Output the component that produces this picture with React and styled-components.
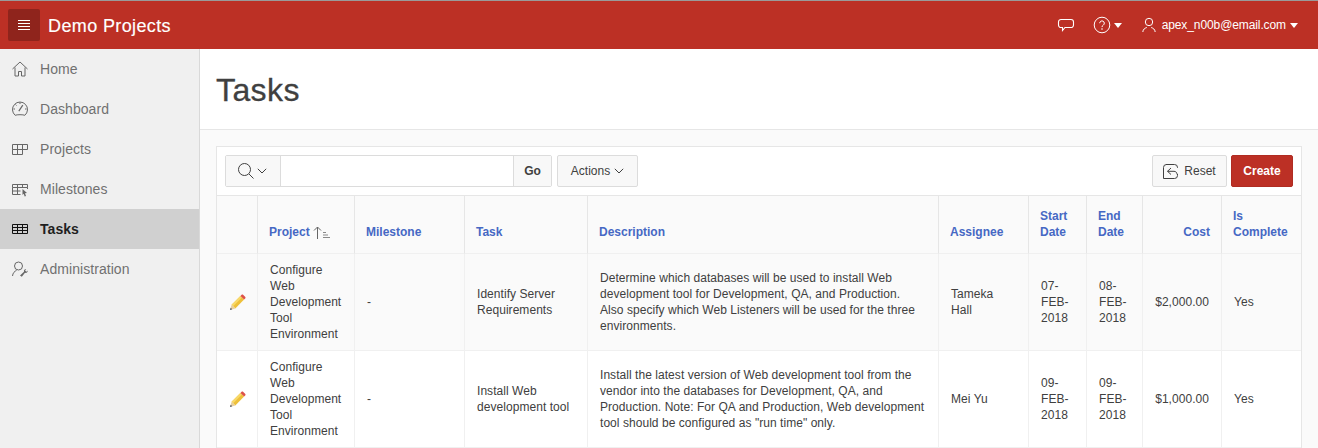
import React from "react";
import styled, { createGlobalStyle } from "styled-components";

const Global = createGlobalStyle`
  html, body { margin: 0; padding: 0; height: 448px; overflow: hidden; background: #fafafa; }
  body { font-family: "Liberation Sans", Arial, sans-serif; font-size: 12px; color: #404040; }
  * { box-sizing: border-box; }
`;
const Page = styled.div`display: flex; flex-direction: column; width: 1318px; height: 448px; overflow: hidden;`;
const Header = styled.header`
  flex: 0 0 49px; display: flex; align-items: center; background: #bc3025; color: #fff;
  border-top: 1px solid #9a9a9a; padding: 0 8px;
`;
const MenuBtn = styled.button`
  width: 32px; height: 32px; padding: 0; border: 0; border-radius: 2px; background: #8f241c;
  display: flex; align-items: center; justify-content: center; color: #fff;
`;
const Brand = styled.div`font-size: 18px; letter-spacing: .38px; margin-left: 8px; padding-top: 2px; line-height: 24px; -webkit-text-stroke: .15px #fff;`;
const HeaderRight = styled.div`margin-left: auto; display: flex; align-items: center; padding-right: 12px; color: #fff;`;
const IconSlot = styled.span`display: flex; align-items: center; margin-right: ${p => p.$mr || 0}px;`;
const UserName = styled.span`font-size: 12px; letter-spacing: -.1px; margin-left: 6px; margin-right: 4px;`;
const Caret = styled.span`
  width: 0; height: 0; border-left: 4px solid transparent; border-right: 4px solid transparent;
  border-top: 5px solid #fff; margin-top: 1px; margin-right: ${p => p.$mr || 0}px;
`;
const Body = styled.div`flex: 1; display: flex; min-height: 0;`;
const Nav = styled.nav`flex: 0 0 200px; background: #f0f0f0; border-right: 1px solid #d9d9d9;`;
const NavItem = styled.div`
  height: 40px; display: flex; align-items: center; padding-left: 12px; font-size: 14px; letter-spacing: .06px;
  background: ${p => p.$active ? "#d0d0d0" : "transparent"};
  color: ${p => p.$active ? "#1f1f1f" : "#707070"};
  font-weight: ${p => p.$active ? 700 : 400};
  width: 199px;
`;
const NavIcon = styled.span`width: 16px; height: 16px; display: flex; margin-right: 12px; color: ${p => p.$active ? "#111" : "#666"};`;
const Main = styled.main`flex: 1; min-width: 0; display: flex; flex-direction: column;`;
const TitleBar = styled.div`
  flex: 0 0 81px; background: #fff; border-bottom: 1px solid #e6e6e6; padding: 21px 16px 0;
`;
const Title = styled.h1`margin: 0; font-size: 32px; letter-spacing: .4px; font-weight: 400; line-height: 40px; color: #404040; -webkit-text-stroke: 0.3px #404040;`;
const Content = styled.div`padding: 16px 16px 0; background: #fafafa;`;
const Report = styled.div`width: 1086px; background: #fff; border: 1px solid #e6e6e6; border-bottom: 0;`;
const Toolbar = styled.div`height: 49px; padding: 8px; display: flex; align-items: flex-start; border-bottom: 1px solid #e6e6e6;`;
const SearchGroup = styled.div`
  display: flex; height: 32px; width: 327px; border: 1px solid #dcdcdc; border-radius: 2px; background: #fff;
`;
const SearchBtn = styled.div`
  width: 55px; display: flex; align-items: center; justify-content: center; gap: 2px; padding-right: 3px;
  background: #f8f8f8; border-right: 1px solid #dcdcdc; color: #404040;
`;
const SearchInput = styled.div`flex: 1;`;
const GoBtn = styled.div`
  width: 38px; display: flex; align-items: center; justify-content: center; font-weight: 700;
  background: #f8f8f8; border-left: 1px solid #dcdcdc; color: #404040;
`;
const Btn = styled.div`
  height: 32px; display: flex; align-items: center; justify-content: center; gap: ${p => p.$gap || 3}px; border-radius: 2px;
  width: ${p => p.$w}px; margin-left: ${p => p.$ml || 0}px;
  background: ${p => p.$primary ? "#bc3025" : "#f8f8f8"};
  border: 1px solid ${p => p.$primary ? "#b02c22" : "#dcdcdc"};
  color: ${p => p.$primary ? "#fff" : "#404040"};
  font-weight: ${p => p.$primary ? 700 : 400};
`;
const Spacer = styled.div`flex: 1;`;
const Table = styled.table`border-collapse: separate; border-spacing: 0; table-layout: fixed; width: 1084px;`;
const Col = styled.col`width: ${p => p.$w}px;`;
const Th = styled.th`
  height: 58px; padding: 0 11px 13px; background: #fafafa; font-size: 12px; line-height: 16px; font-weight: 700; color: #4668c4;
  text-align: ${p => p.$right ? "right" : "left"}; vertical-align: bottom;
  border-bottom: 1px solid #f0f0f0; border-right: ${p => p.$last ? 0 : "1px solid #e6e6e6"};
`;
const Td = styled.td`
  height: 97px; padding: 8px 12px; font-size: 12px; letter-spacing: .05px; line-height: 16px; color: #404040; vertical-align: middle;
  text-align: ${p => p.$right ? "right" : "left"};
  background: ${p => p.$odd ? "#fafafa" : "#fff"};
  border-bottom: 1px solid #f0f0f0; border-right: ${p => p.$last ? 0 : "1px solid #f0f0f0"};
`;
const EditCell = styled(Td)`padding: 0 0 0 12px;`;
const HeadInner = styled.span`display: inline-flex; align-items: center; gap: 3px;`;
const PencilWrap = styled.span`display: block; width: 17px; height: 17px;`;

const stroke = { fill: "none", stroke: "currentColor", strokeWidth: 1 };
const Svg = ({ children, size = 16 }) => <svg width={size} height={size} viewBox="0 0 16 16" {...stroke}>{children}</svg>;

const Burger = () => <svg width="12" height="10" viewBox="0 0 12 10" fill="#fff"><rect y="0" width="12" height="1"/><rect y="3" width="12" height="1"/><rect y="6" width="12" height="1"/><rect y="9" width="12" height="1"/></svg>;
const Chat = () => <svg width="18" height="16" viewBox="0 0 18 16" {...stroke} strokeWidth="1.1"><path d="M4 2.500h10a2.500 2.500 0 0 1 2.500 2.500v3a2.500 2.500 0 0 1-2.500 2.500H8l-2.500 3v-3H4A2.500 2.500 0 0 1 1.500 8V5A2.500 2.500 0 0 1 4 2.500z"/></svg>;
const Help = () => <svg width="18" height="18" viewBox="0 0 18 18"><circle cx="9" cy="9" r="7.800" fill="none" stroke="currentColor"/><path d="M6.700 7.200a2.300 2.300 0 1 1 3.600 1.900c-.9.600-1.300 1-1.300 2" fill="none" stroke="currentColor"/><circle cx="9" cy="13" r=".8" fill="currentColor"/></svg>;
const User = () => <svg width="14" height="16" viewBox="0 0 14 16" {...stroke}><circle cx="7" cy="5" r="3.700"/><path d="M.8 15c.3-2.800 2-3.800 4-4.500M13.200 15c-.3-2.800-2-3.800-4-4.500"/></svg>;

const Home = () => <Svg><path d="M.5 8 8 1l7.500 7M3 6.500V15h3.500v-4.500h3V15H13V6.500"/></Svg>;
const Gauge = () => <Svg><path d="M3.200 14.300a7.500 7.500 0 1 1 9.600 0c-1.400-.8-8.200-.8-9.600 0z"/><path d="M6.800 10.200 10.800 4.200" strokeWidth="1.200"/><path d="M8 1.500v1.500M1.500 8H3M13 8h1.500M3.500 3.500l1 1" /></Svg>;
const Grid = () => <Svg><path d="M.5 3.500h15v5H.5zM.5 8.500h10v5H.5zM5.500 3.500v10M10.500 3.500v5"/></Svg>;
const Milestone = () => <Svg><path d="M.5 3.500h15v3H.5zM.5 6.500v7h8M.5 10h8M5.500 3.500v10M10.500 3.500v3M15.500 6.500v1.500"/><path d="m10.500 8 4.500 4-2 .3 1 2.700-1.300.5-1-2.700-1.200 1.300z" fill="currentColor" stroke="none"/></Svg>;
const TableIcon = () => <svg width="16" height="16" viewBox="0 0 16 16" fill="none" stroke="currentColor"><path d="M.5 3.500h15v9H.5z" strokeWidth="1"/><path d="M.5 6.500h15M.5 9.500h15" strokeWidth="1.200"/><path d="M5.500 3.500v9M10.500 3.500v9" strokeWidth="1"/></svg>;
const Admin = () => <Svg><circle cx="6.500" cy="5" r="4"/><path d="M.5 15c.3-3 2.200-5 4-5.500"/><path d="M8 14.500 12 10.800c-.4-1.300.4-2.800 2.200-2.800l-1.100 1.600 1.300 1.100 1.300-1.300c.2 1.900-1.300 2.900-2.700 2.400L9.800 15.800z" fill="currentColor" stroke="none"/></Svg>;

const Search = () => <svg width="18" height="18" viewBox="0 0 18 18" {...stroke}><circle cx="7.500" cy="7.500" r="6"/><path d="m12 12 4.500 4.500"/></svg>;
const Chev = () => <svg width="10" height="6" viewBox="0 0 10 6" {...stroke}><path d="M.8.800 5 5 9.200.800"/></svg>;
const Undo = () => <svg width="15" height="15" viewBox="0 0 15 15" {...stroke}><path d="M3 .5h8.500a3 3 0 0 1 3 3v.5M14.500 10v1.500a3 3 0 0 1-3 3H.5V3.500a3 3 0 0 1 3-3"/><path d="M8 4 4.500 7.300 8 10.500M4.500 7.300H11c2 0 3 1.500 3 3"/></svg>;
const Sort = () => <svg width="17" height="13" viewBox="0 0 17 13" fill="none" stroke="#666"><path d="M4.500 13V1M1 4.500 4.500 1 8 4.500"/><path d="M10 6.500h3M10 9h5M10 11.500h7" stroke="#888"/></svg>;
const Pencil = () => <svg width="17" height="17" viewBox="0 0 17 17"><path d="M2.600 10.700 11.400 1.900l3.700 3.700-8.800 8.800z" fill="#eec03a"/><path d="M2.600 10.700 11.400 1.900l1.500 1.500-8.800 8.800z" fill="#f8d96a"/><path d="M11.400 1.900l1-1c.6-.6 1.300-.6 1.900 0l1.800 1.800c.6.600.6 1.300 0 1.900l-1 1z" fill="#dd5248"/><path d="M2.600 10.700 6.300 14.400 1 16z" fill="#e8cf9f"/><path d="M1.700 13.800l1.500 1.500L1 16z" fill="#3d4a66"/></svg>;

const navItems = [["Home", Home], ["Dashboard", Gauge], ["Projects", Grid], ["Milestones", Milestone], ["Tasks", TableIcon, true], ["Administration", Admin]];
const widths = [41, 97, 110, 123, 351, 90, 58, 56, 79, 79];
const rows = [
  { task: "Identify Server Requirements", desc: "Determine which databases will be used to install Web development tool for Development, QA, and Production. Also specify which Web Listeners will be used for the three environments.", who: "Tameka Hall", s: "07-FEB-2018", e: "08-FEB-2018", cost: "$2,000.00" },
  { task: "Install Web development tool", desc: "Install the latest version of Web development tool from the vendor into the databases for Development, QA, and Production. Note: For QA and Production, Web development tool should be configured as \"run time\" only.", who: "Mei Yu", s: "09-FEB-2018", e: "09-FEB-2018", cost: "$1,000.00" },
];

export default function App() {
  return (
    <Page>
      <Global />
      <Header>
        <MenuBtn aria-label="Menu"><Burger /></MenuBtn>
        <Brand>Demo Projects</Brand>
        <HeaderRight>
          <IconSlot $mr={18}><Chat /></IconSlot>
          <IconSlot $mr={3}><Help /></IconSlot>
          <Caret $mr={20} />
          <User />
          <UserName>apex_n00b@email.com</UserName>
          <Caret />
        </HeaderRight>
      </Header>
      <Body>
        <Nav>
          {navItems.map(([label, Icon, active]) => (
            <NavItem key={label} $active={active}>
              <NavIcon $active={active}><Icon /></NavIcon>{label}
            </NavItem>
          ))}
        </Nav>
        <Main>
          <TitleBar><Title>Tasks</Title></TitleBar>
          <Content>
            <Report>
              <Toolbar>
                <SearchGroup>
                  <SearchBtn><Search /><Chev /></SearchBtn>
                  <SearchInput />
                  <GoBtn>Go</GoBtn>
                </SearchGroup>
                <Btn $w={81} $ml={5} $gap={4}>Actions<Chev /></Btn>
                <Spacer />
                <Btn $w={75} $gap={6}><Undo />Reset</Btn>
                <Btn $w={62} $ml={4} $primary>Create</Btn>
              </Toolbar>
              <Table>
                <colgroup>{widths.map((w, i) => <Col key={i} $w={w} />)}</colgroup>
                <thead>
                  <tr>
                    <Th />
                    <Th><HeadInner>Project <Sort /></HeadInner></Th>
                    <Th>Milestone</Th>
                    <Th>Task</Th>
                    <Th>Description</Th>
                    <Th>Assignee</Th>
                    <Th>Start Date</Th>
                    <Th>End Date</Th>
                    <Th $right>Cost</Th>
                    <Th $last>Is Complete</Th>
                  </tr>
                </thead>
                <tbody>
                  {rows.map((r, i) => {
                    const odd = i % 2 === 0;
                    return (
                      <tr key={r.task}>
                        <EditCell $odd={odd}><PencilWrap><Pencil /></PencilWrap></EditCell>
                        <Td $odd={odd}>Configure Web Development Tool Environment</Td>
                        <Td $odd={odd}>-</Td>
                        <Td $odd={odd}>{r.task}</Td>
                        <Td $odd={odd}>{r.desc}</Td>
                        <Td $odd={odd}>{r.who}</Td>
                        <Td $odd={odd}>{r.s}</Td>
                        <Td $odd={odd}>{r.e}</Td>
                        <Td $odd={odd} $right>{r.cost}</Td>
                        <Td $odd={odd} $last>Yes</Td>
                      </tr>
                    );
                  })}
                </tbody>
              </Table>
            </Report>
          </Content>
        </Main>
      </Body>
    </Page>
  );
}
